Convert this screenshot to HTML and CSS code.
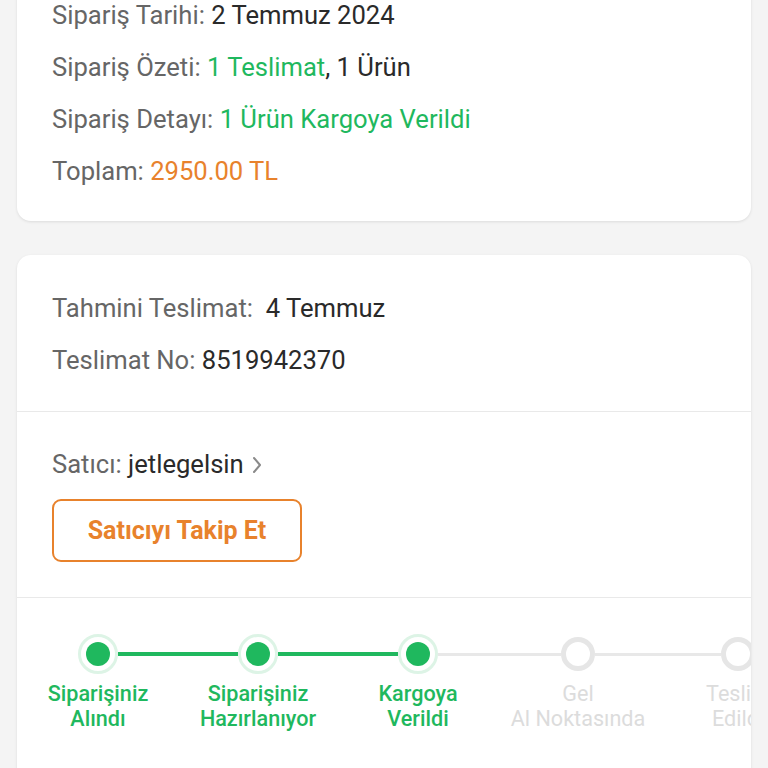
FILE: index.html
```html
<!DOCTYPE html>
<html lang="tr">
<head>
<meta charset="utf-8">
<link rel="stylesheet" href="styles.css">
</head>
<body>
<div class="page">
  <div class="card card-summary">
    <div class="rows">
      <div class="row"><span class="label">Sipariş Tarihi: </span><span class="value">2 Temmuz 2024</span></div>
      <div class="row"><span class="label">Sipariş Özeti: </span><span class="green">1 Teslimat</span><span class="value">, 1 Ürün</span></div>
      <div class="row"><span class="label">Sipariş Detayı: </span><span class="green">1 Ürün Kargoya Verildi</span></div>
      <div class="row"><span class="label">Toplam: </span><span class="orange">2950.00 TL</span></div>
    </div>
  </div>

  <div class="card card-delivery">
    <div class="section section-info">
      <div class="rows">
        <div class="row"><span class="label">Tahmini Teslimat:&nbsp; </span><span class="value">4 Temmuz</span></div>
        <div class="row"><span class="label">Teslimat No: </span><span class="value">8519942370</span></div>
      </div>
    </div>
    <div class="section section-seller">
      <div class="row seller-row"><span class="label">Satıcı:&nbsp;</span><span class="value">jetlegelsin</span>
        <svg class="chev" width="12" height="20" viewBox="0 0 12 20"><path d="M3 3 L9 10 L3 17" fill="none" stroke="#8a8a8a" stroke-width="2" stroke-linecap="round" stroke-linejoin="round"/></svg>
      </div>
      <button class="follow">Satıcıyı Takip Et</button>
    </div>
    <div class="section section-steps">
      <div class="stepper">
        <div class="step done">
          <div class="track"><span class="line none"></span><span class="node"><span class="dot"></span></span><span class="line on"></span></div>
          <div class="step-label">Siparişiniz<br>Alındı</div>
        </div>
        <div class="step done">
          <div class="track"><span class="line on"></span><span class="node"><span class="dot"></span></span><span class="line on"></span></div>
          <div class="step-label">Siparişiniz<br>Hazırlanıyor</div>
        </div>
        <div class="step done">
          <div class="track"><span class="line on"></span><span class="node"><span class="dot"></span></span><span class="line off"></span></div>
          <div class="step-label">Kargoya<br>Verildi</div>
        </div>
        <div class="step todo">
          <div class="track"><span class="line off"></span><span class="node"></span><span class="line off"></span></div>
          <div class="step-label">Gel<br>Al Noktasında</div>
        </div>
        <div class="step todo">
          <div class="track"><span class="line off"></span><span class="node"></span><span class="line none"></span></div>
          <div class="step-label">Teslim<br>Edildi</div>
        </div>
      </div>
    </div>
  </div>
</div>
</body>
</html>
```

FILE: styles.css
```css
* { box-sizing: border-box; }
html, body {
  margin: 0;
  padding: 0;
  background: #f4f4f4;
  font-family: Roboto, "Noto Sans", "Liberation Sans", sans-serif;
  overflow: hidden;
}
.page {
  width: 768px;
  height: 768px;
  overflow: hidden;
  display: flex;
  flex-direction: column;
  gap: 34px;
}
.card {
  margin: 0 17px;
  background: #fff;
  border-radius: 14px;
  box-shadow: 0 1px 3px rgba(0,0,0,0.10);
  overflow: hidden;
  flex-shrink: 0;
}
.card-summary {
  margin-top: -40px;
  padding: 41px 35px 36px;
}
.rows {
  display: flex;
  flex-direction: column;
  gap: 24px;
}
.row {
  font-size: 25.6px;
  line-height: 28px;
  white-space: nowrap;
}
.label { color: #666; }
.value { color: #2a2a2a; }
.green { color: #1fb85e; }
.orange { color: #e8822c; }

.section {
  border-bottom: 1.5px solid #e9e9e9;
  padding: 0 35px;
}
.section-info { padding-top: 39px; padding-bottom: 37px; }
.section-seller { padding-top: 38px; padding-bottom: 35px; }
.seller-row {
  display: flex;
  align-items: center;
}
.chev { margin-left: 7px; margin-top: 1px; }
.follow {
  margin-top: 21px;
  width: 250px;
  height: 63px;
  border: 2px solid #e8822c;
  border-radius: 9px;
  background: #fff;
  color: #e8822c;
  font-family: Roboto, "Noto Sans", "Liberation Sans", sans-serif;
  font-size: 25px;
  font-weight: 700;
  padding: 0;
  display: block;
}
.section-steps {
  border-bottom: none;
  padding: 36px 0 60px 1px;
}
.stepper {
  display: flex;
  width: 820px;
}
.step {
  width: 160px;
  flex-shrink: 0;
  display: flex;
  flex-direction: column;
  align-items: center;
}
.track {
  width: 160px;
  height: 40px;
  display: flex;
  align-items: center;
}
.line {
  flex: 1;
  height: 4px;
}
.line.on { background: #1fb85e; }
.line.off { background: #e8e8e8; height: 3px; }
.line.none { background: transparent; }
.node {
  flex-shrink: 0;
  border-radius: 50%;
  display: flex;
  align-items: center;
  justify-content: center;
}
.done .node {
  width: 40px;
  height: 40px;
  border: 3px solid #ddf4e6;
  background: #fff;
}
.dot {
  width: 24px;
  height: 24px;
  border-radius: 50%;
  background: #1fb85e;
}
.todo .node {
  width: 34px;
  height: 34px;
  border: 5px solid #e6e6e6;
  background: #fff;
  margin: 0;
}
.step-label {
  margin-top: 7px;
  font-size: 21.6px;
  line-height: 25px;
  font-weight: 500;
  text-align: center;
  white-space: nowrap;
}
.done .step-label { color: #1fb85e; }
.todo .step-label { color: #dcdcdc; font-weight: 400; }
```
